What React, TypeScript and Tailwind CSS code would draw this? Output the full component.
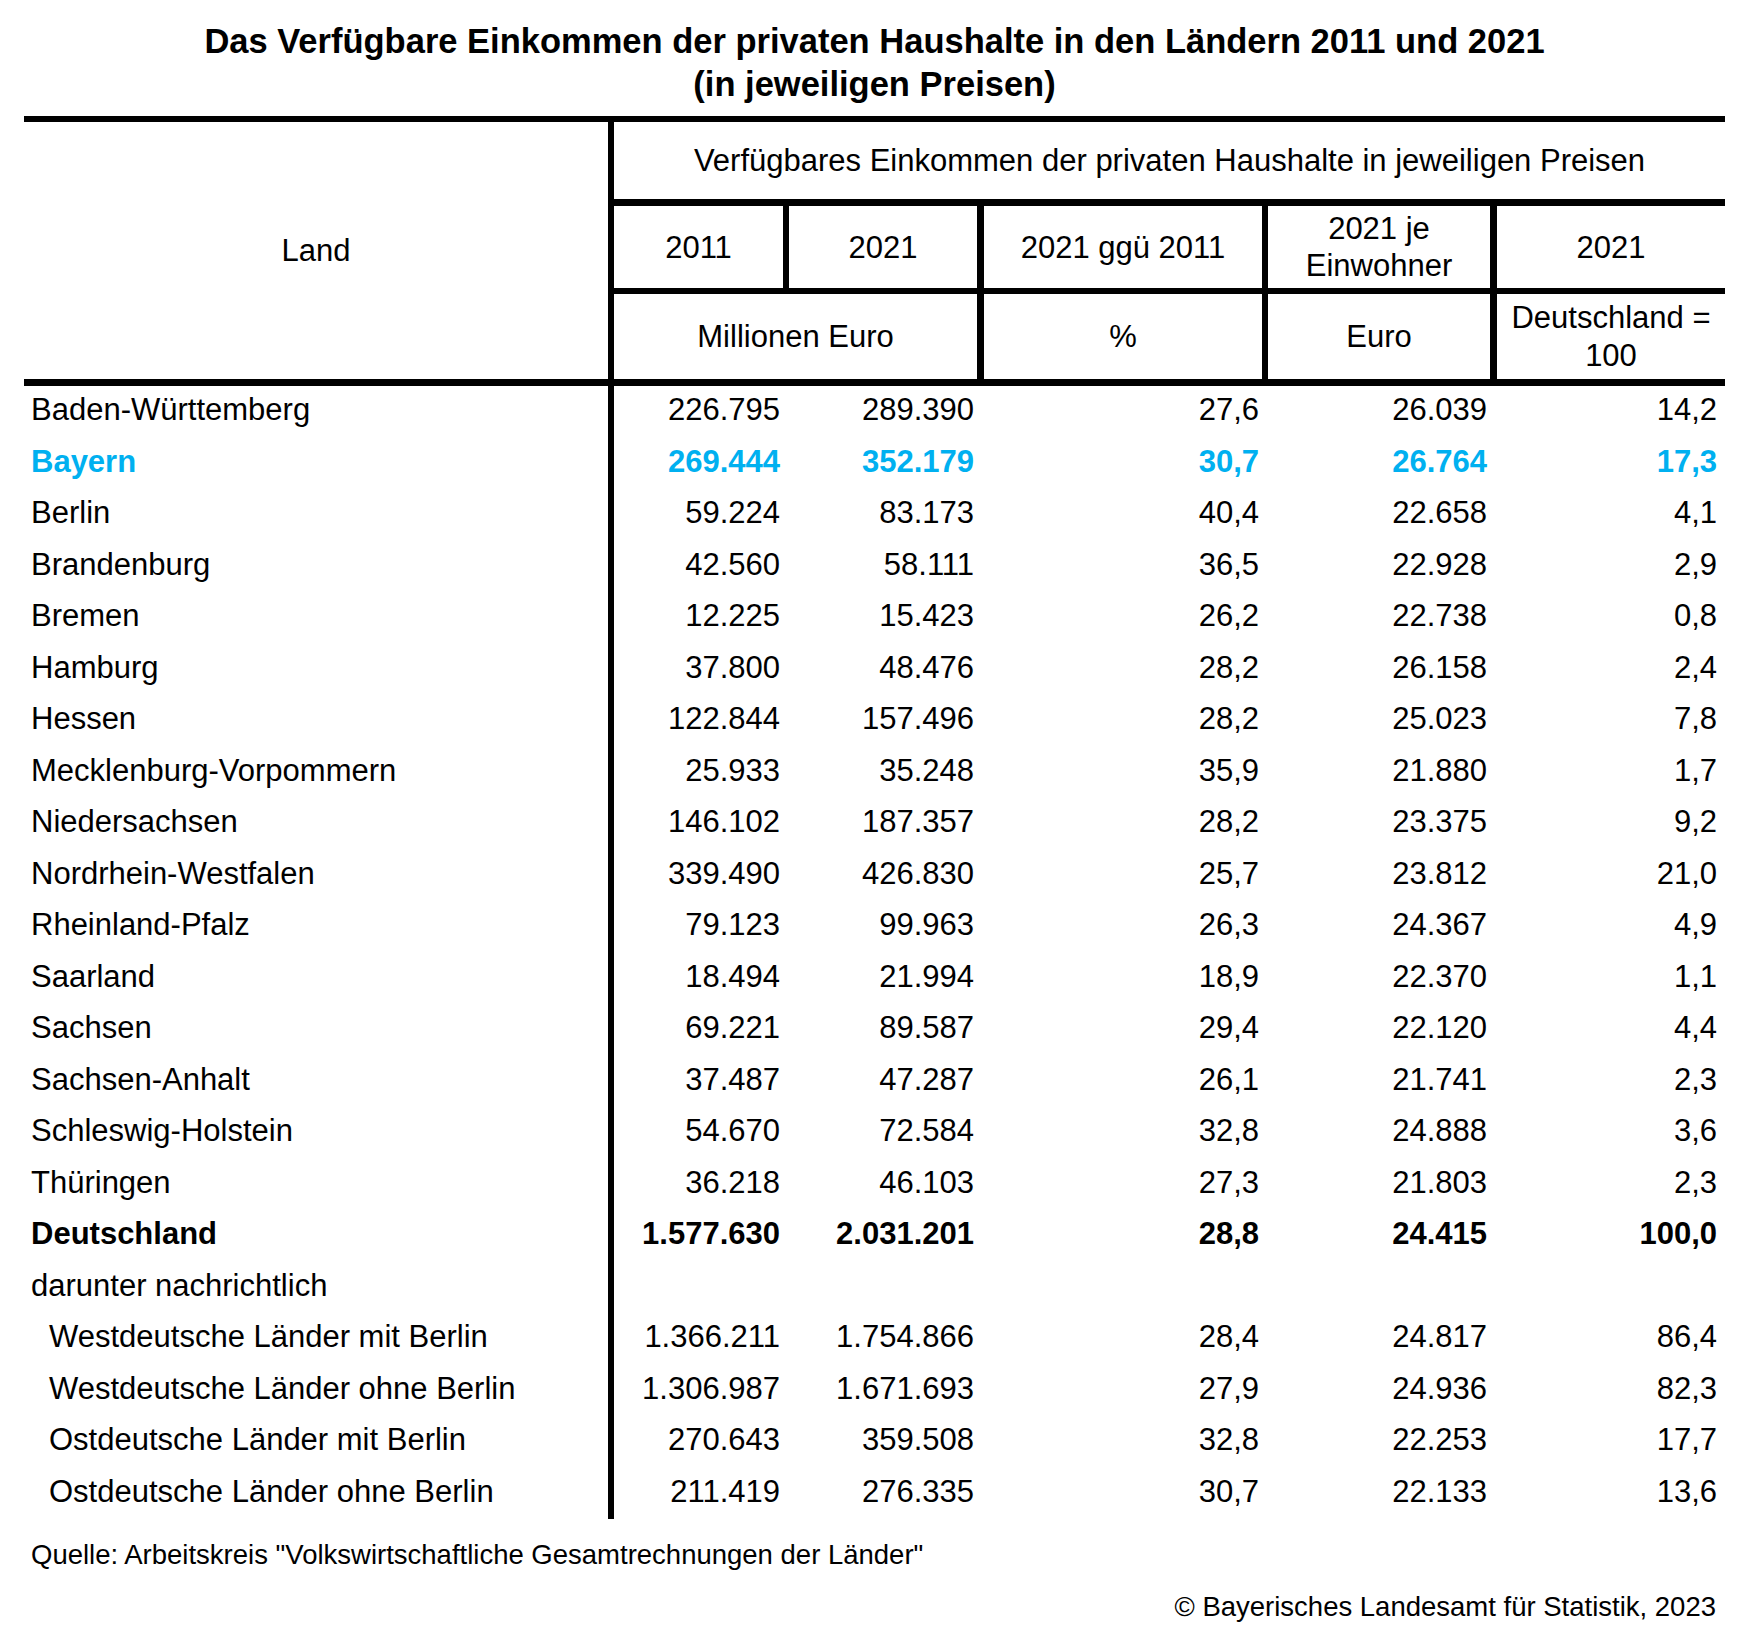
const data: { name: string; v: string[]; kind?: "blue" | "bold" | "indent" | "label" }[] = [
  { name: "Baden-Württemberg", v: ["226.795", "289.390", "27,6", "26.039", "14,2"] },
  { name: "Bayern", v: ["269.444", "352.179", "30,7", "26.764", "17,3"], kind: "blue" },
  { name: "Berlin", v: ["59.224", "83.173", "40,4", "22.658", "4,1"] },
  { name: "Brandenburg", v: ["42.560", "58.111", "36,5", "22.928", "2,9"] },
  { name: "Bremen", v: ["12.225", "15.423", "26,2", "22.738", "0,8"] },
  { name: "Hamburg", v: ["37.800", "48.476", "28,2", "26.158", "2,4"] },
  { name: "Hessen", v: ["122.844", "157.496", "28,2", "25.023", "7,8"] },
  { name: "Mecklenburg-Vorpommern", v: ["25.933", "35.248", "35,9", "21.880", "1,7"] },
  { name: "Niedersachsen", v: ["146.102", "187.357", "28,2", "23.375", "9,2"] },
  { name: "Nordrhein-Westfalen", v: ["339.490", "426.830", "25,7", "23.812", "21,0"] },
  { name: "Rheinland-Pfalz", v: ["79.123", "99.963", "26,3", "24.367", "4,9"] },
  { name: "Saarland", v: ["18.494", "21.994", "18,9", "22.370", "1,1"] },
  { name: "Sachsen", v: ["69.221", "89.587", "29,4", "22.120", "4,4"] },
  { name: "Sachsen-Anhalt", v: ["37.487", "47.287", "26,1", "21.741", "2,3"] },
  { name: "Schleswig-Holstein", v: ["54.670", "72.584", "32,8", "24.888", "3,6"] },
  { name: "Thüringen", v: ["36.218", "46.103", "27,3", "21.803", "2,3"] },
  { name: "Deutschland", v: ["1.577.630", "2.031.201", "28,8", "24.415", "100,0"], kind: "bold" },
  { name: "darunter nachrichtlich", v: ["", "", "", "", ""], kind: "label" },
  { name: "Westdeutsche Länder mit Berlin", v: ["1.366.211", "1.754.866", "28,4", "24.817", "86,4"], kind: "indent" },
  { name: "Westdeutsche Länder ohne Berlin", v: ["1.306.987", "1.671.693", "27,9", "24.936", "82,3"], kind: "indent" },
  { name: "Ostdeutsche Länder mit Berlin", v: ["270.643", "359.508", "32,8", "22.253", "17,7"], kind: "indent" },
  { name: "Ostdeutsche Länder ohne Berlin", v: ["211.419", "276.335", "30,7", "22.133", "13,6"], kind: "indent" },
];

function rowClass(kind?: string) {
  if (kind === "blue") return "font-bold text-[#00b0f0]";
  if (kind === "bold") return "font-bold text-black";
  return "text-black";
}

export default function App() {
  return (
    <div className="w-[1754px] min-h-[1649px] bg-white text-black font-['Liberation_Sans',Arial,sans-serif]">
      <div className="ml-[24px] w-[1701px]">
        {/* Title */}
        <div className="pt-[20px] mb-[10px] text-center font-bold text-[34.5px] leading-[43px]">
          <div>Das Verfügbare Einkommen der privaten Haushalte in den Ländern 2011 und 2021</div>
          <div>(in jeweiligen Preisen)</div>
        </div>

        {/* top rule */}
        <div className="h-[6px] bg-black" />

        {/* header */}
        <div className="flex text-[31px] leading-[37px]">
          <div className="w-[590px] h-[257px] border-r-[6px] border-black flex items-center justify-center">
            Land
          </div>
          <div className="w-[1111px] flex flex-col">
            <div className="h-[77px] flex items-center justify-center">
              Verfügbares Einkommen der privaten Haushalte in jeweiligen Preisen
            </div>
            <div className="h-[7px] bg-black" />
            <div className="h-[82px] flex">
              <div className="w-[169px] flex items-center justify-center">2011</div>
              <div className="w-[6px] bg-black" />
              <div className="w-[188px] flex items-center justify-center">2021</div>
              <div className="w-[7px] bg-black" />
              <div className="w-[278px] flex items-center justify-center">2021 ggü 2011</div>
              <div className="w-[6px] bg-black" />
              <div className="w-[222px] flex flex-col items-center justify-center text-center">
                <span>2021 je</span>
                <span>Einwohner</span>
              </div>
              <div className="w-[7px] bg-black" />
              <div className="w-[228px] flex items-center justify-center">2021</div>
            </div>
            <div className="h-[6px] bg-black" />
            <div className="h-[85px] flex">
              <div className="w-[363px] flex items-center justify-center">Millionen Euro</div>
              <div className="w-[7px] bg-black" />
              <div className="w-[278px] flex items-center justify-center">%</div>
              <div className="w-[6px] bg-black" />
              <div className="w-[222px] flex items-center justify-center">Euro</div>
              <div className="w-[7px] bg-black" />
              <div className="w-[228px] flex flex-col items-center justify-center text-center leading-[38px]">
                <span>Deutschland =</span>
                <span>100</span>
              </div>
            </div>
          </div>
        </div>

        {/* header bottom rule */}
        <div className="h-[7px] bg-black" />

        {/* body */}
        <div className="flex text-[31px]">
          <div className="w-[590px] border-r-[6px] border-black flex flex-col">
            {data.map((r) => (
              <div
                key={r.name}
                className={`h-[51.5px] pb-[3px] flex items-center ${r.kind === "indent" ? "pl-[25px]" : "pl-[7px]"} ${rowClass(r.kind)}`}
              >
                {r.name}
              </div>
            ))}
          </div>
          <div className="flex flex-col">
            {data.map((r) => (
              <div key={r.name} className={`h-[51.5px] pb-[3px] flex items-center ${rowClass(r.kind)}`}>
                <div className="w-[166px] text-right">{r.v[0]}</div>
                <div className="w-[194px] text-right">{r.v[1]}</div>
                <div className="w-[285px] text-right">{r.v[2]}</div>
                <div className="w-[228px] text-right">{r.v[3]}</div>
                <div className="w-[230px] text-right">{r.v[4]}</div>
              </div>
            ))}
          </div>
        </div>

        {/* footer */}
        <div className="mt-[16px] text-[27.5px] leading-[40px] pl-[7px]">
          Quelle: Arbeitskreis "Volkswirtschaftliche Gesamtrechnungen der Länder"
        </div>
        <div className="mt-[12px] text-[27.5px] leading-[40px] text-right pr-[9px]">
          © Bayerisches Landesamt für Statistik, 2023
        </div>
      </div>
    </div>
  );
}
